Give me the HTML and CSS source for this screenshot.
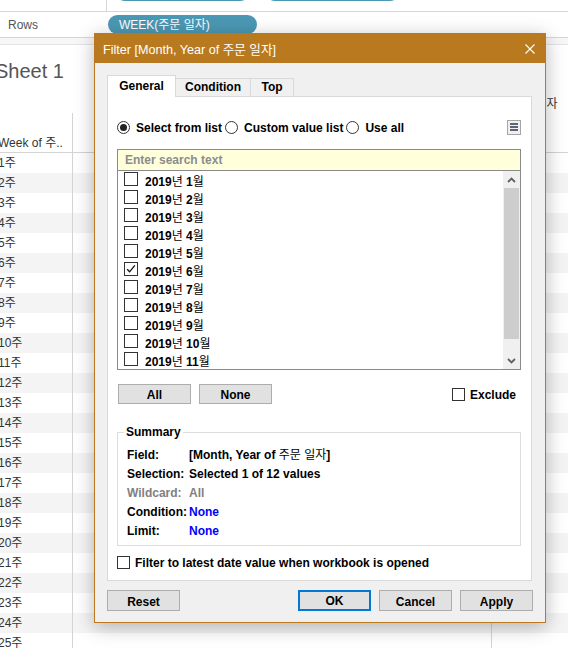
FILE: index.html
```html
<!DOCTYPE html>
<html>
<head>
<meta charset="utf-8">
<link rel="stylesheet" href="styles.css">
</head>
<body>
<div class="app">
  <div class="colshelf">
    <div class="shelf-label"></div>
    <div class="shelf-pills">
      <span class="pill-top pill-a"></span>
      <span class="pill-top pill-b"></span>
    </div>
  </div>
  <div class="rowshelf">
    <div class="shelf-label">Rows</div>
    <span class="pill">WEEK(주문 일자)</span>
  </div>
  <div class="band"></div>
  <div class="sheet">
    <div class="sheet-title">Sheet 1</div>
    <div class="grid top-hdr"><div></div><div></div><div class="top-hdr-text">주문 일자</div></div>
    <div class="grid thead"><div class="c1">Week of 주..</div><div class="c2"></div><div class="c3"></div></div>
    <div class="grid trow"><div class="c1">1주</div><div class="c2"></div><div class="c3"></div></div>
    <div class="grid trow alt"><div class="c1">2주</div><div class="c2"></div><div class="c3"></div></div>
    <div class="grid trow"><div class="c1">3주</div><div class="c2"></div><div class="c3"></div></div>
    <div class="grid trow alt"><div class="c1">4주</div><div class="c2"></div><div class="c3"></div></div>
    <div class="grid trow"><div class="c1">5주</div><div class="c2"></div><div class="c3"></div></div>
    <div class="grid trow alt"><div class="c1">6주</div><div class="c2"></div><div class="c3"></div></div>
    <div class="grid trow"><div class="c1">7주</div><div class="c2"></div><div class="c3"></div></div>
    <div class="grid trow alt"><div class="c1">8주</div><div class="c2"></div><div class="c3"></div></div>
    <div class="grid trow"><div class="c1">9주</div><div class="c2"></div><div class="c3"></div></div>
    <div class="grid trow alt"><div class="c1">10주</div><div class="c2"></div><div class="c3"></div></div>
    <div class="grid trow"><div class="c1">11주</div><div class="c2"></div><div class="c3"></div></div>
    <div class="grid trow alt"><div class="c1">12주</div><div class="c2"></div><div class="c3"></div></div>
    <div class="grid trow"><div class="c1">13주</div><div class="c2"></div><div class="c3"></div></div>
    <div class="grid trow alt"><div class="c1">14주</div><div class="c2"></div><div class="c3"></div></div>
    <div class="grid trow"><div class="c1">15주</div><div class="c2"></div><div class="c3"></div></div>
    <div class="grid trow alt"><div class="c1">16주</div><div class="c2"></div><div class="c3"></div></div>
    <div class="grid trow"><div class="c1">17주</div><div class="c2"></div><div class="c3"></div></div>
    <div class="grid trow alt"><div class="c1">18주</div><div class="c2"></div><div class="c3"></div></div>
    <div class="grid trow"><div class="c1">19주</div><div class="c2"></div><div class="c3"></div></div>
    <div class="grid trow alt"><div class="c1">20주</div><div class="c2"></div><div class="c3"></div></div>
    <div class="grid trow"><div class="c1">21주</div><div class="c2"></div><div class="c3"></div></div>
    <div class="grid trow alt"><div class="c1">22주</div><div class="c2"></div><div class="c3"></div></div>
    <div class="grid trow"><div class="c1">23주</div><div class="c2"></div><div class="c3"></div></div>
    <div class="grid trow alt"><div class="c1">24주</div><div class="c2"></div><div class="c3"></div></div>
    <div class="grid trow"><div class="c1">25주</div><div class="c2"></div><div class="c3"></div></div>
  </div>
</div>

<div class="dialog">
  <div class="titlebar">
    <span class="title">Filter [Month, Year of 주문 일자]</span>
    <svg class="close" width="10" height="10" viewBox="0 0 10 10"><path d="M0.5 0.5 L9.5 9.5 M9.5 0.5 L0.5 9.5" stroke="#fff" stroke-width="1.1" fill="none"/></svg>
  </div>
  <div class="dbody">
    <div class="tabs">
      <div class="tab active">General</div>
      <div class="tab t-cond">Condition</div>
      <div class="tab t-top">Top</div>
    </div>
    <div class="panel">
      <div class="radios">
        <span class="radio on"></span><span class="rlabel">Select from list</span>
        <span class="radio"></span><span class="rlabel">Custom value list</span>
        <span class="radio"></span><span class="rlabel">Use all</span>
        <span class="menu-btn"><i></i><i></i><i></i></span>
      </div>
      <div class="search">Enter search text</div>
      <div class="list">
        <div class="items">
          <div class="item"><span class="cb"></span><span class="tx">2019<span class="ko">년</span> 1<span class="ko">월</span></span></div>
          <div class="item"><span class="cb"></span><span class="tx">2019<span class="ko">년</span> 2<span class="ko">월</span></span></div>
          <div class="item"><span class="cb"></span><span class="tx">2019<span class="ko">년</span> 3<span class="ko">월</span></span></div>
          <div class="item"><span class="cb"></span><span class="tx">2019<span class="ko">년</span> 4<span class="ko">월</span></span></div>
          <div class="item"><span class="cb"></span><span class="tx">2019<span class="ko">년</span> 5<span class="ko">월</span></span></div>
          <div class="item"><span class="cb"><svg width="12" height="12" viewBox="0 0 12 12"><path d="M2.2 6.2 L4.6 8.8 L9.8 2.4" stroke="#111" stroke-width="1.3" fill="none"/></svg></span><span class="tx">2019<span class="ko">년</span> 6<span class="ko">월</span></span></div>
          <div class="item"><span class="cb"></span><span class="tx">2019<span class="ko">년</span> 7<span class="ko">월</span></span></div>
          <div class="item"><span class="cb"></span><span class="tx">2019<span class="ko">년</span> 8<span class="ko">월</span></span></div>
          <div class="item"><span class="cb"></span><span class="tx">2019<span class="ko">년</span> 9<span class="ko">월</span></span></div>
          <div class="item"><span class="cb"></span><span class="tx">2019<span class="ko">년</span> 10<span class="ko">월</span></span></div>
          <div class="item"><span class="cb"></span><span class="tx">2019<span class="ko">년</span> 11<span class="ko">월</span></span></div>
        </div>
        <div class="scrollbar">
          <div class="sb-btn"><svg width="9" height="6" viewBox="0 0 9 6"><path d="M1 5 L4.5 1.5 L8 5" stroke="#606060" stroke-width="1.8" fill="none"/></svg></div>
          <div class="sb-thumb"></div>
          <div class="sb-track"></div>
          <div class="sb-btn"><svg width="9" height="6" viewBox="0 0 9 6"><path d="M1 1 L4.5 4.5 L8 1" stroke="#606060" stroke-width="1.8" fill="none"/></svg></div>
        </div>
      </div>
      <div class="btnrow">
        <button class="btn b-all">All</button>
        <button class="btn b-none">None</button>
        <span class="exclude"><span class="cb sm"></span><span class="tx">Exclude</span></span>
      </div>
      <fieldset class="summary">
        <legend>Summary</legend>
        <div class="srow"><span class="sk">Field:</span><span class="sv">[Month, Year of <span class="ko">주문 일자</span>]</span></div>
        <div class="srow"><span class="sk">Selection:</span><span class="sv">Selected 1 of 12 values</span></div>
        <div class="srow dim"><span class="sk">Wildcard:</span><span class="sv">All</span></div>
        <div class="srow"><span class="sk">Condition:</span><span class="sv blue">None</span></div>
        <div class="srow"><span class="sk">Limit:</span><span class="sv blue">None</span></div>
      </fieldset>
      <div class="latest"><span class="cb sm"></span><span class="tx">Filter to latest date value when workbook is opened</span></div>
    </div>
    <div class="footer">
      <button class="btn fbtn">Reset</button>
      <span class="spacer"></span>
      <button class="btn fbtn ok">OK</button>
      <button class="btn fbtn">Cancel</button>
      <button class="btn fbtn">Apply</button>
    </div>
  </div>
</div>
</body>
</html>
```

FILE: styles.css
```css
* { box-sizing: border-box; }
html, body { margin: 0; padding: 0; }
body {
  width: 568px;
  height: 648px;
  overflow: hidden;
  position: relative;
  background: #fff;
  font-family: "Liberation Sans", "Noto Sans CJK KR", sans-serif;
  font-size: 12px;
  color: #000;
}

/* ---------- background workspace ---------- */
.app { width: 568px; }
.colshelf {
  display: flex;
  height: 12px;
  border-bottom: 1px solid #d6d6d6;
}
.colshelf .shelf-label { width: 107px; border-right: 1px solid #d6d6d6; }
.shelf-pills { display: flex; align-items: flex-start; overflow: hidden; flex: 1; }
.pill-top {
  display: block;
  width: 135px;
  height: 20px;
  margin-top: -19px;
  border-radius: 10px;
  background: #4b98b4;
}
.pill-a { margin-left: 8px; }
.pill-b { margin-left: 15px; }

.rowshelf {
  display: flex;
  align-items: flex-start;
  height: 26px;
  border-bottom: 1px solid #d6d6d6;
}
.rowshelf .shelf-label {
  width: 108px;
  padding-left: 8px;
  padding-top: 1px;
  line-height: 25px;
  color: #555;
}
.pill {
  margin-top: 3px;
  width: 149px;
  height: 19px;
  line-height: 19px;
  padding: 1px 11px 0;
  border-radius: 10px;
  background: #4b98b4;
  color: #fff;
  white-space: nowrap;
}
.band {
  height: 7px;
  background: #f7f7f7;
  border-bottom: 1px solid #e4e4e4;
}

.sheet { overflow: hidden; }
.sheet-title {
  margin-top: 14px;
  margin-left: -5px;
  font-size: 20px;
  line-height: 24px;
  color: #555;
  white-space: nowrap;
}
.grid {
  display: grid;
  grid-template-columns: 73px 419px 1fr;
}
.top-hdr { margin-top: 13px; height: 17px; line-height: 17px; color: #333; }
.top-hdr-text { padding-left: 18px; white-space: nowrap; overflow: hidden; }

.thead { height: 40px; border-bottom: 1px solid #d4d4d4; color: #333; }
.thead .c1 { padding-top: 21px; line-height: 19px; white-space: nowrap; overflow: hidden; text-indent: -2px; }
.c1, .c2 { border-right: 1px solid #d4d4d4; }
.trow { height: 20px; color: #333; }
.trow.alt { background: #f4f4f4; }
.trow .c1 { padding-top: 1px; line-height: 19px; text-indent: -2px; white-space: nowrap; overflow: hidden; }

/* ---------- dialog ---------- */
.dialog {
  position: absolute;
  left: 94px;
  top: 33px;
  width: 452px;
  height: 590px;
  border: 1px solid #b8791f;
  background: #f0f0f0;
  box-shadow: 0 4px 18px rgba(0, 0, 0, 0.28);
}
.titlebar {
  height: 29px;
  background: #b97a1f;
  display: flex;
  align-items: center;
  justify-content: space-between;
  padding: 0 10px 0 8px;
}
.title {
  color: #fff;
  font-size: 12.6px;
  white-space: nowrap;
}
.close { display: block; }

.dbody { padding: 12px 12px 11px; }
.tabs {
  display: flex;
  align-items: flex-end;
  height: 21px;
}
.tab {
  height: 18px;
  line-height: 17px;
  text-align: center;
  font-weight: bold;
  border-top: 1px solid #d9d9d9;
  border-right: 1px solid #d9d9d9;
  background: #f0f0f0;
}
.tab.active {
  width: 69px;
  height: 22px;
  line-height: 20px;
  margin-bottom: -1px;
  border-left: 1px solid #d9d9d9;
  background: #fff;
  position: relative;
  z-index: 1;
}
.t-cond { width: 75px; }
.t-top { width: 43px; }

.panel {
  width: 425px;
  height: 485px;
  border: 1px solid #d9d9d9;
  background: #fff;
  padding: 21px 10px 0 9px;
}
.radios {
  display: flex;
  align-items: center;
  height: 18px;
  font-weight: bold;
}
.radio {
  width: 13px;
  height: 13px;
  border: 1px solid #333;
  border-radius: 50%;
  background: #fff;
  margin-right: 6px;
  display: flex;
  align-items: center;
  justify-content: center;
  flex: none;
}
.radio.on::after {
  content: "";
  width: 7px;
  height: 7px;
  border-radius: 50%;
  background: #222;
}
.rlabel { margin-right: 3px; white-space: nowrap; padding-top: 1px; }
.menu-btn {
  margin-left: auto;
  width: 14px;
  height: 15px;
  border: 1px solid #a5a5a5;
  background: #f0f0f0;
  display: flex;
  flex-direction: column;
  align-items: center;
  justify-content: center;
  gap: 1px;
}
.menu-btn i {
  display: block;
  width: 8px;
  height: 2px;
  background: #5b6573;
}

.search {
  margin-top: 13px;
  height: 22px;
  border: 1px solid #8a8a8a;
  background: #ffffdc;
  color: #8c8c8c;
  font-weight: bold;
  padding: 1px 0 0 7px;
  line-height: 19px;
}
.list {
  height: 199px;
  border: 1px solid #8a8a8a;
  border-top: none;
  display: flex;
  overflow: hidden;
}
.items { flex: 1; }
.item {
  height: 18px;
  display: flex;
  align-items: center;
  padding-left: 6px;
  font-weight: bold;
  white-space: nowrap;
}
.tx { padding-top: 1px; }
.ko { font-weight: normal; }
.cb {
  width: 14px;
  height: 14px;
  border: 1px solid #333;
  background: #fff;
  margin-right: 7px;
  flex: none;
  display: flex;
  align-items: center;
  justify-content: center;
}
.item .cb { margin-bottom: 2px; }
.cb.sm { width: 13px; height: 13px; margin-right: 5px; }
.scrollbar {
  width: 17px;
  background: #f0f0f0;
  display: flex;
  flex-direction: column;
}
.sb-btn {
  height: 17px;
  display: flex;
  align-items: center;
  justify-content: center;
  flex: none;
}
.sb-thumb { height: 151px; margin: 0 1px; background: #cdcdcd; flex: none; }
.sb-track { flex: 1; }

.btnrow {
  margin-top: 14px;
  display: flex;
  align-items: center;
  height: 20px;
}
.btn {
  font-family: inherit;
  font-size: 12px;
  font-weight: bold;
  color: #000;
  background: #e1e1e1;
  border: 1px solid #adadad;
  width: 73px;
  height: 20px;
  padding: 2px 0 0;
  margin: 0;
}
.b-all { margin-left: 1px; }
.b-none { margin-left: 8px; }
.exclude {
  margin-left: auto;
  margin-right: 5px;
  display: flex;
  align-items: center;
  font-weight: bold;
}
.exclude .tx, .latest .tx { padding-top: 2px; }

.summary {
  margin: 21px 0 0;
  padding: 7px 9px 4px;
  border: 1px solid #dcdcdc;
  min-width: 0;
}
.summary legend {
  padding: 0 2px;
  margin-left: -3px;
  line-height: 14px;
  font-weight: bold;
}
.srow {
  display: flex;
  line-height: 19px;
  font-weight: bold;
  white-space: nowrap;
}
.sk { width: 62px; flex: none; }
.srow.dim { color: #808080; }
.blue { color: #0000ff; }

.latest {
  margin-top: 8px;
  height: 16px;
  display: flex;
  align-items: center;
  font-weight: bold;
  white-space: nowrap;
}

.footer {
  margin-top: 9px;
  display: flex;
  gap: 8px;
}
.spacer { flex: 1; }
.fbtn { height: 21px; }
.ok { border: 2px solid #0078d7; padding-top: 1px; }
```
